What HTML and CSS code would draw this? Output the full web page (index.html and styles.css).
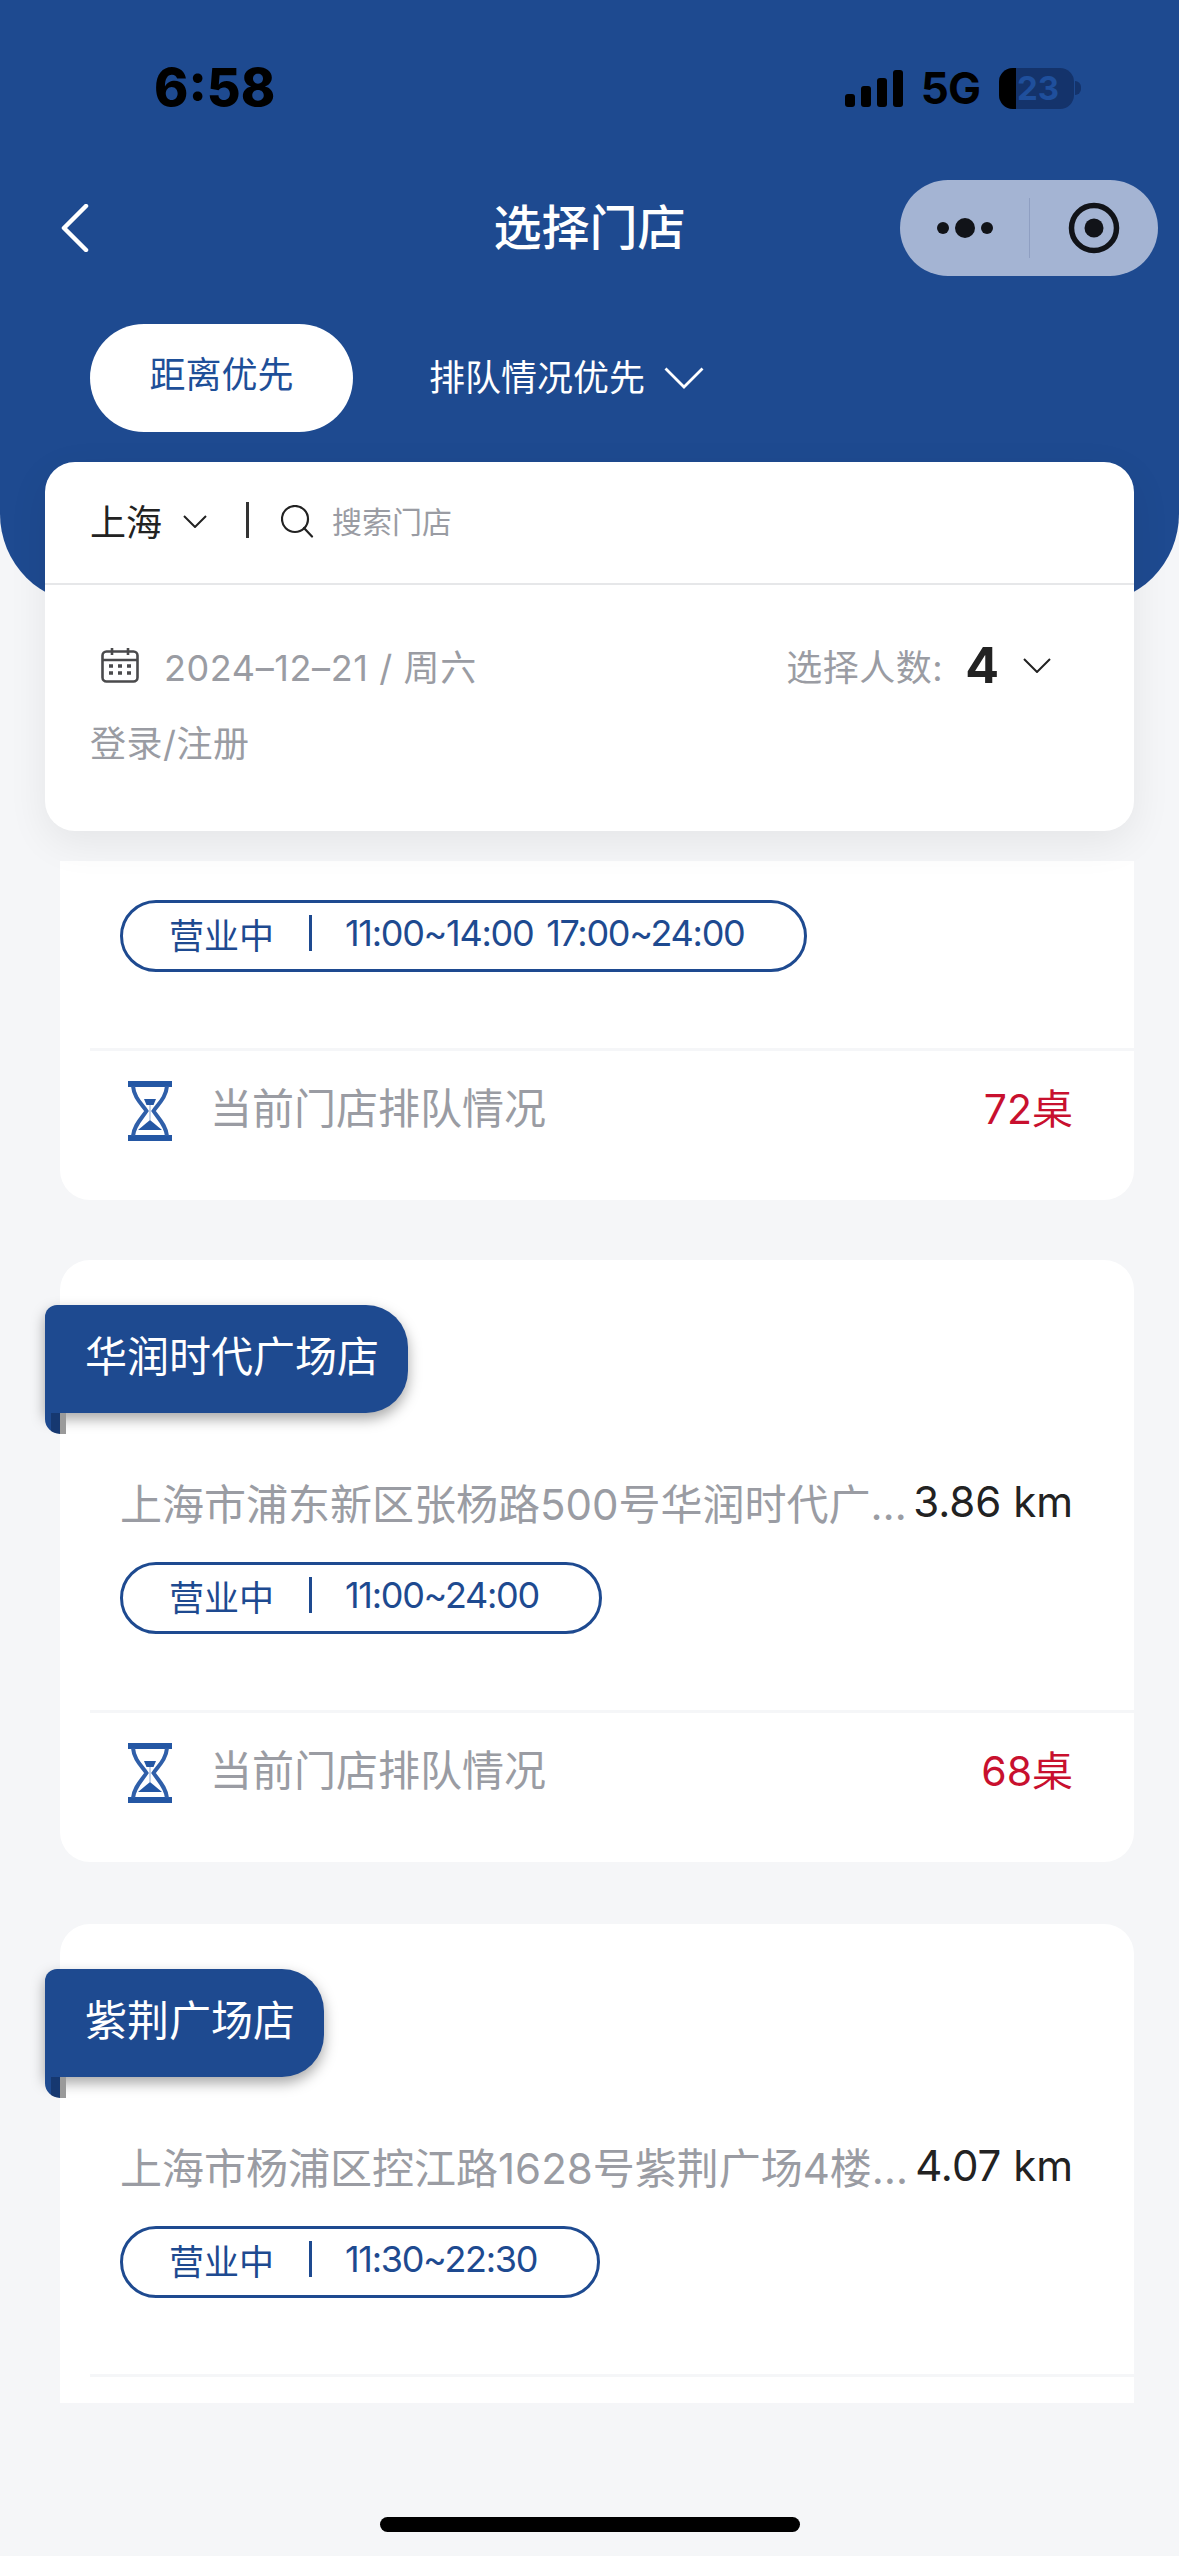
FILE: index.html
```html
<!DOCTYPE html>
<html lang="zh-CN">
<head>
    <meta charset="UTF-8">
    <meta name="viewport" content="width=device-width, initial-scale=1.0">
    <title>选择门店</title>
    <link rel="stylesheet" href="styles.css">
</head>
<body>
    <svg class="defs" width="0" height="0" aria-hidden="true">
        <symbol id="hourglass" viewBox="0 0 44 60">
            <rect x="0" y="0" width="44" height="6" fill="#2457a4"/>
            <rect x="0" y="54" width="44" height="6" fill="#2457a4"/>
            <path d="M5 5 C6 17 14 23 18.5 30 C14 37 6 44 5 55 M39 5 C38 17 30 23 25.5 30 C30 37 38 44 39 55" fill="none" stroke="#2f5fa9" stroke-width="4"/>
            <path d="M16 18 H28 L25.5 24 H18.5Z" fill="#2457a4"/>
            <path d="M22 39 L34 49 H10Z" fill="#2457a4"/>
            <path d="M21 24 H23 V39 H21Z" fill="#c3d2e8"/>
        </symbol>
    </svg>

    <div class="page">
        <header class="top">
            <div class="status">
                <span class="time">6:58</span>
                <div class="status-right">
                    <svg class="signal" width="58" height="37" viewBox="0 0 58 37">
                        <rect x="0" y="24" width="10" height="13" rx="3"/>
                        <rect x="16" y="16" width="10" height="21" rx="3"/>
                        <rect x="32" y="8" width="10" height="29" rx="3"/>
                        <rect x="48" y="0" width="10" height="37" rx="3"/>
                    </svg>
                    <span class="net">5G</span>
                    <div class="battery"><span class="battery-fill"></span><span class="battery-num">23</span></div>
                    <span class="battery-cap"></span>
                </div>
            </div>

            <div class="nav">
                <svg class="back" width="28" height="48" viewBox="0 0 28 48">
                    <path d="M25 2 L3 24 L25 46" fill="none" stroke="#fff" stroke-width="4.5" stroke-linecap="round" stroke-linejoin="round"/>
                </svg>
                <h1 class="title">选择门店</h1>
                <div class="capsule">
                    <div class="capsule-dots"><i></i><i class="big"></i><i></i></div>
                    <div class="capsule-line"></div>
                    <svg class="capsule-target" width="52" height="52" viewBox="0 0 52 52">
                        <circle cx="26" cy="26" r="22.5" fill="none" stroke="#111318" stroke-width="5.5"/>
                        <circle cx="26" cy="26" r="9.5" fill="#111318"/>
                    </svg>
                </div>
            </div>

            <div class="tabs">
                <div class="tab-on">距离优先</div>
                <div class="tab-off">排队情况优先</div>
                <svg width="40" height="22" viewBox="0 0 40 22">
                    <path d="M1.5 1.5 L20 20 L38.5 1.5" fill="none" stroke="#fff" stroke-width="2.8"/>
                </svg>
            </div>
        </header>

        <section class="filter">
            <div class="filter-top">
                <span class="city">上海</span>
                <svg class="chev-s" width="24" height="13" viewBox="0 0 24 13">
                    <path d="M1 1 L12 12 L23 1" fill="none" stroke="#222" stroke-width="2"/>
                </svg>
                <span class="filter-line"></span>
                <svg class="search" width="33" height="33" viewBox="0 0 33 33">
                    <circle cx="14" cy="14" r="13" fill="none" stroke="#222" stroke-width="2.2"/>
                    <path d="M23 23 L31 31.5" stroke="#222" stroke-width="2.2" stroke-linecap="round"/>
                </svg>
                <span class="search-text">搜索门店</span>
            </div>
            <div class="filter-body">
                <div class="date-row">
                    <svg class="calendar" width="38" height="36" viewBox="0 0 38 36">
                        <rect x="1.5" y="4.5" width="35" height="30" rx="4" fill="none" stroke="#4a4a4c" stroke-width="2.6"/>
                        <path d="M1.5 13 H36.5 M11 1 V8 M27 1 V8" fill="none" stroke="#4a4a4c" stroke-width="2.6"/>
                        <path d="M8 19 H12 M17 19 H21 M26 19 H30 M8 26 H12 M17 26 H21 M26 26 H30" stroke="#4a4a4c" stroke-width="3.4"/>
                    </svg>
                    <span class="date">2024–12–21 / 周六</span>
                    <span class="people-label">选择人数:</span>
                    <span class="people-num">4</span>
                    <svg width="28" height="15" viewBox="0 0 28 15">
                        <path d="M1 1 L14 14 L27 1" fill="none" stroke="#222" stroke-width="2"/>
                    </svg>
                </div>
                <div class="login">登录/注册</div>
            </div>
        </section>

        <main class="list">
            <article class="store store-cut-top">
                <div class="store-body">
                    <div class="tag"><span>营业中</span><span class="tag-line"></span><span class="tag-time">11:00~14:00 17:00~24:00</span></div>
                </div>
                <div class="queue">
                    <svg class="hourglass" width="44" height="60"><use href="#hourglass"/></svg>
                    <span class="queue-label">当前门店排队情况</span>
                    <span class="queue-num">72桌</span>
                </div>
            </article>

            <article class="store">
                <div class="ribbon">华润时代广场店<span class="ribbon-fold"></span></div>
                <div class="store-body">
                    <div class="addr-row">
                        <span class="addr">上海市浦东新区张杨路500号华润时代广…</span>
                        <span class="dist">3.86 km</span>
                    </div>
                    <div class="tag"><span>营业中</span><span class="tag-line"></span><span class="tag-time">11:00~24:00</span></div>
                </div>
                <div class="queue">
                    <svg class="hourglass" width="44" height="60"><use href="#hourglass"/></svg>
                    <span class="queue-label">当前门店排队情况</span>
                    <span class="queue-num">68桌</span>
                </div>
            </article>

            <article class="store">
                <div class="ribbon">紫荆广场店<span class="ribbon-fold"></span></div>
                <div class="store-body">
                    <div class="addr-row">
                        <span class="addr">上海市杨浦区控江路1628号紫荆广场4楼…</span>
                        <span class="dist">4.07 km</span>
                    </div>
                    <div class="tag"><span>营业中</span><span class="tag-line"></span><span class="tag-time">11:30~22:30</span></div>
                </div>
                <div class="queue"></div>
            </article>
        </main>

        <div class="home-bar"></div>
    </div>
</body>
</html>
```

FILE: styles.css
```css
* {
    box-sizing: border-box;
}

body {
    margin: 0;
    background: #f5f6f8;
    font-family: Inter, "Noto Sans CJK SC", sans-serif;
    color: #222;
}

.defs {
    position: absolute;
}

.page {
    width: 1179px;
    height: 2556px;
    overflow: hidden;
    display: flex;
    flex-direction: column;
}

/* Blue header */
.top {
    height: 604px;
    background: #1e4a90;
    border-radius: 0 0 90px 90px;
    flex: none;
}

.status {
    height: 180px;
    padding: 64px 98px 0 154px;
    display: flex;
    justify-content: space-between;
    align-items: flex-start;
}

.time {
    font-size: 52px;
    line-height: 48px;
    font-weight: 800;
    color: #000;
    width: 120px;
    white-space: nowrap;
}

.status-right {
    display: flex;
    align-items: center;
    height: 48px;
}

.signal {
    fill: #000;
    margin-right: 18px;
}

.net {
    font-size: 44px;
    font-weight: 700;
    color: #000;
    margin-right: 19px;
    letter-spacing: -1px;
}

.battery {
    position: relative;
    width: 75px;
    height: 41px;
    border-radius: 14px;
    background: #14336b;
    overflow: hidden;
    text-align: center;
}

.battery-fill {
    position: absolute;
    left: 0;
    top: 0;
    width: 17px;
    height: 41px;
    background: #000;
}

.battery-num {
    position: relative;
    font-size: 33px;
    line-height: 41px;
    font-weight: 700;
    color: #1f4f9c;
    margin-left: 3px;
}

.battery-cap {
    width: 6px;
    height: 14px;
    margin-left: 1px;
    background: #14336b;
    border-radius: 0 7px 7px 0;
}

.nav {
    height: 96px;
    padding: 0 21px;
    display: grid;
    grid-template-columns: 258px 1fr 258px;
    align-items: center;
}

.back {
    display: block;
    margin-left: 40px;
}

.title {
    margin: 0 0 8px;
    font-size: 48px;
    font-weight: 500;
    color: #fff;
    text-align: center;
}

.capsule {
    width: 258px;
    height: 96px;
    border-radius: 48px;
    background: #a4b4d3;
    display: flex;
    align-items: center;
}

.capsule-dots {
    width: 129px;
    display: flex;
    justify-content: center;
    align-items: center;
    gap: 6px;
}

.capsule-dots i {
    width: 12px;
    height: 12px;
    border-radius: 50%;
    background: #111318;
}

.capsule-dots i.big {
    width: 20px;
    height: 20px;
}

.capsule-line {
    width: 1px;
    height: 60px;
    background: #8f9fc2;
}

.capsule-target {
    margin-left: 38px;
}

.tabs {
    margin-top: 48px;
    padding-left: 90px;
    display: flex;
    align-items: center;
}

.tab-on {
    width: 263px;
    height: 108px;
    border-radius: 54px;
    background: #fff;
    color: #1e4f98;
    font-size: 36px;
    line-height: 102px;
    text-align: center;
}

.tab-off {
    margin-left: 76px;
    margin-right: 19px;
    color: #fff;
    font-size: 36px;
    line-height: 102px;
}

/* City / date card, overlaps the header */
.filter {
    position: relative;
    flex: none;
    margin: -142px 45px 0;
    height: 369px;
    background: #fff;
    border-radius: 30px;
    box-shadow: 0 12px 40px rgba(0, 0, 0, 0.07);
}

.filter-top {
    height: 123px;
    padding: 0 0 6px 45px;
    border-bottom: 2px solid #e6e7e9;
    display: flex;
    align-items: center;
}

.city {
    font-size: 36px;
}

.chev-s {
    margin: 3px 0 0 21px;
}

.filter-line {
    width: 3px;
    height: 36px;
    margin-left: 39px;
    background: #333;
}

.search {
    margin: 4px 0 0 32px;
}

.search-text {
    margin-left: 18px;
    font-size: 30px;
    color: #9a9ca3;
}

.filter-body {
    padding: 55px 83px 0 45px;
}

.date-row {
    height: 50px;
    padding-left: 11px;
    display: flex;
    align-items: center;
}

.date {
    flex: 1;
    margin-left: 25px;
    font-size: 36px;
    letter-spacing: 0.6px;
    color: #9a9ca3;
}

.people-label {
    font-size: 36px;
    letter-spacing: 0.5px;
    color: #9a9ca3;
}

.people-num {
    margin: 0 24px 0 22px;
    font-size: 50px;
    font-weight: 700;
    line-height: 50px;
}

.login {
    margin-top: 25px;
    font-size: 36px;
    letter-spacing: 0.5px;
    color: #9a9ca3;
}

/* Store list */
.list {
    flex: none;
    height: 1542px;
    margin-top: 30px;
    padding: 0 45px 0 60px;
    overflow: hidden;
}

.store {
    background: #fff;
    border-radius: 30px;
    margin-bottom: 62px;
    padding-top: 45px;
}

.store-cut-top {
    padding-top: 39px;
    margin-bottom: 60px;
    border-radius: 0 0 30px 30px;
}

.store-body {
    padding: 0 61px 0 60px;
}

.ribbon {
    position: relative;
    width: max-content;
    height: 108px;
    margin-left: -15px;
    padding: 0 29px 0 40px;
    background: #1e4a90;
    border-radius: 12px 42px 42px 0;
    box-shadow: 0 6px 14px rgba(0, 0, 0, 0.35);
    color: #fff;
    font-size: 42px;
    line-height: 104px;
}

/* little fold under the ribbon's left end */
.ribbon-fold {
    position: absolute;
    left: 0;
    top: 108px;
    width: 21px;
    height: 21px;
    background: linear-gradient(to right, #1e4a90 6px, #163870 6px, #163870 15px, #9a9a9a 15px);
    border-radius: 0 0 0 15px;
}

.addr-row {
    height: 66px;
    margin-top: 55px;
    display: flex;
    align-items: center;
}

.addr {
    flex: 1;
    min-width: 0;
    font-size: 42px;
    color: #9a9ca3;
    white-space: nowrap;
}

.dist {
    flex: none;
    font-size: 42px;
}

.tag {
    width: max-content;
    height: 72px;
    margin-top: 28px;
    padding: 0 60px 6px 46px;
    border: 3px solid #1e4a90;
    border-radius: 36px;
    color: #1e4a90;
    font-size: 35px;
    display: flex;
    align-items: center;
}

.tag-line {
    width: 3px;
    height: 36px;
    margin: 0 33px 0 35px;
    background: #1e4a90;
}

.tag-time {
    font-size: 36px;
    letter-spacing: -1.3px;
    word-spacing: 4px;
    white-space: nowrap;
}

.store-cut-top .tag {
    margin-top: 0;
}

.queue {
    height: 152px;
    margin: 76px 0 0 30px;
    padding: 30px 38px 0 38px;
    border-top: 3px solid #f5f6f8;
    display: flex;
    align-items: flex-start;
}

.hourglass {
    flex: none;
    filter: blur(0.7px);
}

.queue-label {
    flex: 1;
    margin-left: 38px;
    font-size: 42px;
    line-height: 56px;
    color: #9a9ca3;
}

.queue-num {
    margin-right: 23px;
    font-size: 41px;
    line-height: 56px;
    color: #c8102e;
}

.home-bar {
    width: 420px;
    height: 15px;
    margin: 114px auto 0;
    border-radius: 8px;
    background: #000;
    flex: none;
}
```
